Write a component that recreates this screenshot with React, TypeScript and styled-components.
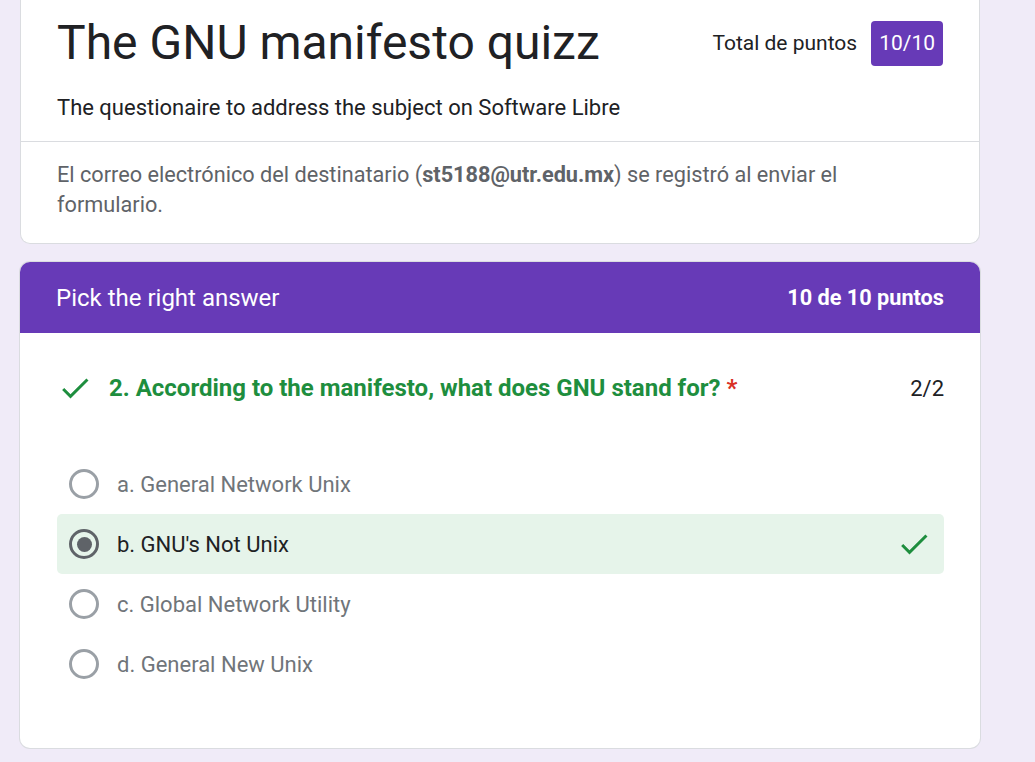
import React from "react";
import styled, { createGlobalStyle } from "styled-components";

const GlobalStyle = createGlobalStyle`
  html, body {
    margin: 0;
    padding: 0;
    background: #f0ebf8;
    font-family: Roboto, "Liberation Sans", Arial, sans-serif;
    color: #202124;
  }
`;

const options = [
  { id: "a", text: "a. General Network Unix", selected: false },
  { id: "b", text: "b. GNU's Not Unix", selected: true },
  { id: "c", text: "c. Global Network Utility", selected: false },
  { id: "d", text: "d. General New Unix", selected: false },
];

const CheckIcon = ({ size = 36 }: { size?: number }) => (
  <svg width={size} height={size} viewBox="0 0 24 24" fill="#1e8e3e">
    <path d="M9 16.17L4.83 12l-1.42 1.41L9 19 21 7l-1.41-1.41z" />
  </svg>
);

const App = () => {
  return (
    <>
      <GlobalStyle />
      <Page>
        <HeaderCard>
          <TitleBlock>
            <TitleRow>
              <Title>The GNU manifesto quizz</Title>
              <Score>
                <ScoreLabel>Total de puntos</ScoreLabel>
                <Badge>10/10</Badge>
              </Score>
            </TitleRow>
            <Description>
              The questionaire to address the subject on Software Libre
            </Description>
          </TitleBlock>
          <EmailNote>
            <span>El correo electrónico del destinatario (</span>
            <b>st5188@utr.edu.mx</b>
            <span>) se registró al enviar el </span>
            <span>formulario.</span>
          </EmailNote>
        </HeaderCard>

        <SectionCard>
          <SectionHead>
            <SectionTitle>Pick the right answer</SectionTitle>
            <SectionPoints>10 de 10 puntos</SectionPoints>
          </SectionHead>
          <Question>
            <QuestionRow>
              <QuestionMark>
                <CheckIcon />
              </QuestionMark>
              <QuestionText>
                2. According to the manifesto, what does GNU stand for?{" "}
                <Required>*</Required>
              </QuestionText>
              <QuestionScore>2/2</QuestionScore>
            </QuestionRow>
            <OptionList>
              {options.map((o) => (
                <Option key={o.id} $selected={o.selected}>
                  <Radio $selected={o.selected} />
                  <OptionText $selected={o.selected}>{o.text}</OptionText>
                  {o.selected && (
                    <OptionCheck>
                      <CheckIcon />
                    </OptionCheck>
                  )}
                </Option>
              ))}
            </OptionList>
          </Question>
        </SectionCard>
      </Page>
    </>
  );
};

export default App;

const Page = styled.div`
  width: 960px;
  margin-left: 20px;
  display: flex;
  flex-direction: column;
  gap: 18px;
  padding-bottom: 40px;
`;

const Card = styled.div`
  background: #fff;
  border: 1px solid #dadce0;
  border-radius: 10px;
  overflow: hidden;
`;

const HeaderCard = styled(Card)`
  border-top: none;
  border-top-left-radius: 0;
  border-top-right-radius: 0;
`;

const TitleBlock = styled.div`
  padding: 13px 36px 18px 36px;
  border-bottom: 1px solid #dadce0;
`;

const TitleRow = styled.div`
  display: flex;
  align-items: center;
  justify-content: space-between;
`;

const Title = styled.h1`
  margin: 0;
  font-size: 48px;
  font-weight: 400;
  line-height: 60px;
  color: #202124;
`;

const Score = styled.div`
  display: flex;
  align-items: center;
  gap: 14px;
`;

const ScoreLabel = styled.span`
  font-size: 21px;
  color: #202124;
`;

const Badge = styled.span`
  background: #673ab7;
  color: #fff;
  font-size: 21px;
  height: 45px;
  padding: 0 8px;
  border-radius: 4px;
  display: flex;
  align-items: center;
`;

const Description = styled.div`
  margin-top: 20px;
  font-size: 22px;
  line-height: 30px;
  color: #202124;
`;

const EmailNote = styled.div`
  padding: 18px 36px 23px 36px;
  font-size: 21.7px;
  line-height: 30px;
  color: #5f6368;

  b {
    font-weight: 700;
  }
`;

const SectionCard = styled(Card)`
  border: none;
  box-shadow: 0 0 0 1px #dadce0;
`;

const SectionHead = styled.div`
  background: #673ab7;
  color: #fff;
  height: 71px;
  padding: 0 36px;
  display: flex;
  align-items: center;
  justify-content: space-between;
`;

const SectionTitle = styled.span`
  font-size: 24px;
`;

const SectionPoints = styled.span`
  font-size: 21.7px;
  font-weight: 700;
`;

const Question = styled.div`
  padding: 37px 36px 54px 37px;
`;

const QuestionRow = styled.div`
  display: flex;
  align-items: center;
`;

const QuestionMark = styled.span`
  display: flex;
  margin-right: 16px;
`;

const QuestionText = styled.span`
  flex: 1;
  font-size: 24px;
  font-weight: 700;
  color: #1e8e3e;
`;

const Required = styled.span`
  color: #d93025;
`;

const QuestionScore = styled.span`
  font-size: 22px;
  color: #202124;
`;

const OptionList = styled.div`
  margin-top: 48px;
  display: flex;
  flex-direction: column;
`;

const Option = styled.div<{ $selected: boolean }>`
  height: 60px;
  display: flex;
  align-items: center;
  padding: 0 12px;
  border-radius: 5px;
  background: ${(p) => (p.$selected ? "#e6f4ea" : "transparent")};
`;

const Radio = styled.span<{ $selected: boolean }>`
  width: 30px;
  height: 30px;
  box-sizing: border-box;
  border-radius: 50%;
  border: 3px solid ${(p) => (p.$selected ? "#5f6368" : "#9aa0a6")};
  display: flex;
  align-items: center;
  justify-content: center;
  flex-shrink: 0;

  &::after {
    content: "";
    display: ${(p) => (p.$selected ? "block" : "none")};
    width: 15px;
    height: 15px;
    border-radius: 50%;
    background: #5f6368;
  }
`;

const OptionText = styled.span<{ $selected: boolean }>`
  flex: 1;
  margin-left: 18px;
  font-size: 22px;
  color: ${(p) => (p.$selected ? "#202124" : "#70757a")};
`;

const OptionCheck = styled.span`
  display: flex;
  margin-right: 0;
`;
